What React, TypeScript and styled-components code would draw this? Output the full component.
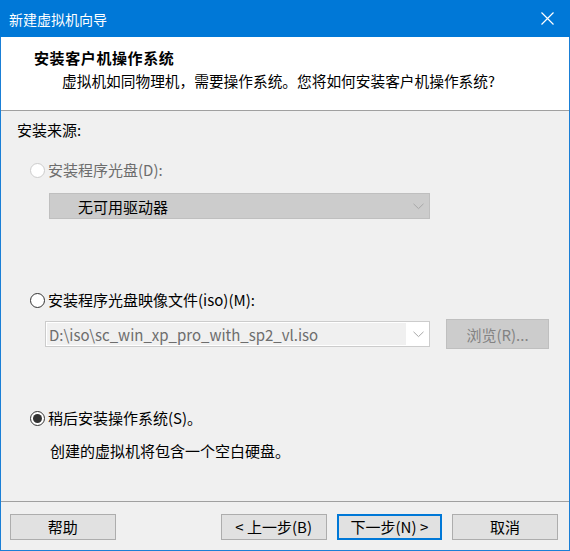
import React from 'react';
import styled, { createGlobalStyle } from 'styled-components';

const GlobalStyle = createGlobalStyle`
  html, body {
    margin: 0;
    padding: 0;
    background: #f0f0f0;
  }
  * { box-sizing: border-box; }
`;

const FONT = `"Noto Sans CJK SC", "Noto Sans", sans-serif`;

const Window = styled.div`
  width: 570px;
  height: 551px;
  display: flex;
  flex-direction: column;
  border: 1px solid #1a7fd6;
  border-top: none;
  font-family: ${FONT};
  font-size: 15px;
  color: #000;
  background: #f0f0f0;
`;

const TitleBar = styled.div`
  height: 37px;
  margin: 0 -1px;
  background: #0078d7;
  color: #fff;
  display: flex;
  align-items: center;
  justify-content: space-between;
  padding: 0 16px 0 9px;
  flex-shrink: 0;
  font-size: 14px;
`;

const TitleText = styled.span`
  line-height: 20px;
  padding-top: 1px;
`;

const Header = styled.div`
  height: 74px;
  background: #fff;
  border-bottom: 1px solid #a0a0a0;
  display: flex;
  flex-direction: column;
  padding-top: 11px;
  flex-shrink: 0;
`;

const HeaderTitle = styled.div`
  font-weight: bold;
  line-height: 20px;
  padding-left: 33px;
  letter-spacing: 0.6px;
`;

const HeaderSub = styled.div`
  line-height: 20px;
  padding-left: 61px;
  margin-top: 3px;
  font-size: 14.7px;
`;

const Body = styled.div`
  flex: 1;
  padding: 9px 0 0 16px;
  display: flex;
  flex-direction: column;
`;

const Line = styled.div<{ $top?: number; $indent?: number; $muted?: boolean }>`
  line-height: 20px;
  height: 20px;
  margin-top: ${p => p.$top || 0}px;
  padding-left: ${p => p.$indent || 0}px;
  color: ${p => (p.$muted ? '#6d6d6d' : '#000')};
  display: flex;
  align-items: center;
  white-space: nowrap;
`;

const Radio = styled.span<{ $checked?: boolean; $disabled?: boolean }>`
  width: 15px;
  height: 15px;
  border-radius: 50%;
  border: 1px solid ${p => (p.$disabled ? '#cccccc' : '#333')};
  background: #fff;
  margin: 0 3px 0 13px;
  display: inline-flex;
  align-items: center;
  justify-content: center;
  flex-shrink: 0;
  &::after {
    content: '';
    width: 9px;
    height: 9px;
    border-radius: 50%;
    background: ${p => (p.$checked ? '#333' : 'transparent')};
  }
`;

const FieldRow = styled.div<{ $top: number; $indent: number }>`
  display: flex;
  align-items: center;
  margin-top: ${p => p.$top}px;
  padding-left: ${p => p.$indent}px;
`;

const Select = styled.div<{ $width: number; $disabled?: boolean }>`
  width: ${p => p.$width}px;
  height: 26px;
  border: 1px solid ${p => (p.$disabled ? '#bfbfbf' : '#cccccc')};
  background: ${p => (p.$disabled ? '#cccccc' : '#fff')};
  display: flex;
  align-items: center;
  padding: 1px;
`;

const SelectText = styled.div<{ $pad: number; $fill?: boolean }>`
  flex: 1;
  height: 100%;
  display: flex;
  align-items: center;
  padding-left: ${p => p.$pad}px;
  background: ${p => (p.$fill ? '#f0f0f0' : 'transparent')};
  color: ${p => (p.$fill ? '#6d6d6d' : '#000')};
  white-space: nowrap;
`;

const Arrow = styled.div`
  width: 22px;
  display: flex;
  align-items: center;
  justify-content: center;
  padding-left: 2px;
`;

const BrowseButton = styled.div`
  width: 103px;
  height: 30px;
  margin-left: 16px;
  background: #cccccc;
  border: 1px solid #bfbfbf;
  color: #838383;
  display: flex;
  align-items: center;
  justify-content: center;
`;

const Footer = styled.div`
  height: 49px;
  border-top: 1px solid #a0a0a0;
  display: flex;
  align-items: flex-start;
  padding: 12px 11px 0 9px;
  flex-shrink: 0;
`;

const Button = styled.div<{ $primary?: boolean; $gap?: number }>`
  width: 106px;
  height: 26px;
  margin-left: ${p => p.$gap || 0}px;
  background: #e1e1e1;
  border: ${p => (p.$primary ? '2px solid #0078d7' : '1px solid #adadad')};
  display: flex;
  align-items: center;
  justify-content: center;
  line-height: 20px;
`;

const ChevronDown = () => (
  <svg width="11" height="7" viewBox="0 0 11 7">
    <path d="M0.5 0.8 L5.5 5.6 L10.5 0.8" fill="none" stroke="#a8a8a8" strokeWidth="1" />
  </svg>
);

const CloseIcon = () => (
  <svg width="13" height="13" viewBox="0 0 13 13">
    <path d="M0.5 0.5 L12.5 12.5 M12.5 0.5 L0.5 12.5" stroke="#fff" strokeWidth="1.2" />
  </svg>
);

export default function App() {
  return (
    <>
      <GlobalStyle />
      <Window>
        <TitleBar>
          <TitleText>新建虚拟机向导</TitleText>
          <CloseIcon />
        </TitleBar>
        <Header>
          <HeaderTitle>安装客户机操作系统</HeaderTitle>
          <HeaderSub>虚拟机如同物理机，需要操作系统。您将如何安装客户机操作系统?</HeaderSub>
        </Header>
        <Body>
          <Line>安装来源:</Line>
          <Line $top={20} $muted>
            <Radio $disabled />
            安装程序光盘(D):
          </Line>
          <FieldRow $top={13} $indent={32}>
            <Select $width={381} $disabled>
              <SelectText $pad={27}>无可用驱动器</SelectText>
              <Arrow><ChevronDown /></Arrow>
            </Select>
          </FieldRow>
          <Line $top={71}>
            <Radio />
            安装程序光盘映像文件(iso)(M):
          </Line>
          <FieldRow $top={9} $indent={28}>
            <Select $width={385}>
              <SelectText $pad={2} $fill>D:\iso\sc_win_xp_pro_with_sp2_vl.iso</SelectText>
              <Arrow><ChevronDown /></Arrow>
            </Select>
            <BrowseButton>浏览(R)...</BrowseButton>
          </FieldRow>
          <Line $top={59}>
            <Radio $checked />
            稍后安装操作系统(S)。
          </Line>
          <Line $top={13} $indent={33}>创建的虚拟机将包含一个空白硬盘。</Line>
        </Body>
        <Footer>
          <Button>帮助</Button>
          <Button $gap={105}>&lt; 上一步(B)</Button>
          <Button $gap={10} $primary>下一步(N) &gt;</Button>
          <Button $gap={10}>取消</Button>
        </Footer>
      </Window>
    </>
  );
}
